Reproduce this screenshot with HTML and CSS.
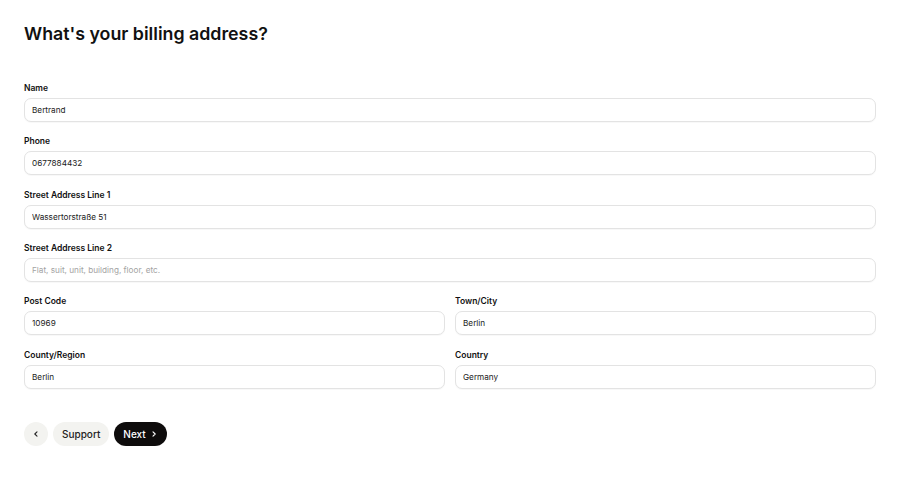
FILE: index.html
```html
<!DOCTYPE html>
<html>
<head>
<meta charset="utf-8">
<link rel="stylesheet" href="styles.css">
</head>
<body>
<main class="page">
  <h1 class="title">What's your billing address?</h1>
  <form class="form">
    <div class="field full">
      <label class="label">Name</label>
      <input class="input" value="Bertrand">
    </div>
    <div class="field full">
      <label class="label">Phone</label>
      <input class="input" value="0677884432">
    </div>
    <div class="field full">
      <label class="label">Street Address Line 1</label>
      <input class="input" value="Wassertorstraße 51">
    </div>
    <div class="field full">
      <label class="label">Street Address Line 2</label>
      <input class="input" placeholder="Flat, suit, unit, building, floor, etc.">
    </div>
    <div class="field">
      <label class="label">Post Code</label>
      <input class="input" value="10969">
    </div>
    <div class="field">
      <label class="label">Town/City</label>
      <input class="input" value="Berlin">
    </div>
    <div class="field">
      <label class="label">County/Region</label>
      <input class="input" value="Berlin">
    </div>
    <div class="field">
      <label class="label">Country</label>
      <input class="input" value="Germany">
    </div>
  </form>
  <div class="actions">
    <button class="btn back" type="button" aria-label="Back">
      <svg width="8" height="8" viewBox="0 0 8 8"><path d="M5 1.8 L2.8 4 L5 6.2" fill="none" stroke="#222" stroke-width="1.1" stroke-linecap="round" stroke-linejoin="round"/></svg>
    </button>
    <button class="btn support" type="button">Support</button>
    <button class="btn next" type="button">Next
      <svg width="8" height="8" viewBox="0 0 8 8"><path d="M3 1.8 L5.2 4 L3 6.2" fill="none" stroke="#fff" stroke-width="1.1" stroke-linecap="round" stroke-linejoin="round"/></svg>
    </button>
  </div>
</main>
</body>
</html>
```

FILE: styles.css
```css
* { box-sizing: border-box; }
html, body { margin: 0; padding: 0; background: #fff; }
body {
  font-family: Inter, "Noto Sans", sans-serif;
  color: #111;
}
.page {
  padding: 22px 24px 0 24px;
}
.title {
  margin: 0;
  font-size: 17.8px;
  line-height: 24px;
  font-weight: 600;
  color: #111;
}
.form {
  margin-top: 36px;
  display: grid;
  grid-template-columns: 1fr 1fr;
  column-gap: 10px;
  row-gap: 13.35px;
}
.field { display: flex; flex-direction: column; gap: 4px; }
.field.full { grid-column: 1 / -1; }
.label {
  font-size: 8.5px;
  line-height: 12px;
  font-weight: 600;
  color: #111;
}
.input {
  height: 24px;
  border: 1px solid #e3e3e3;
  border-radius: 7px;
  padding: 0 7px;
  font-family: Inter, "Noto Sans", sans-serif;
  font-size: 8.2px;
  color: #222;
  background: #fff;
  outline: none;
  box-shadow: 0 1px 1px rgba(0,0,0,0.03);
}
.input::placeholder { color: #a3a3a3; }
.actions {
  margin-top: 33.5px;
  display: flex;
  gap: 5px;
  align-items: center;
}
.btn {
  height: 24px;
  border: none;
  border-radius: 12px;
  font-family: Inter, "Noto Sans", sans-serif;
  font-size: 10px;
  font-weight: 500;
  display: inline-flex;
  align-items: center;
  justify-content: center;
  padding: 0;
  cursor: pointer;
}
.back { width: 24px; background: #f3f3f0; }
.support { padding: 0 9px; background: #f3f3f0; color: #222; }
.next { padding: 0 9px; background: #0e0c0c; color: #fff; gap: 4px; }
```
